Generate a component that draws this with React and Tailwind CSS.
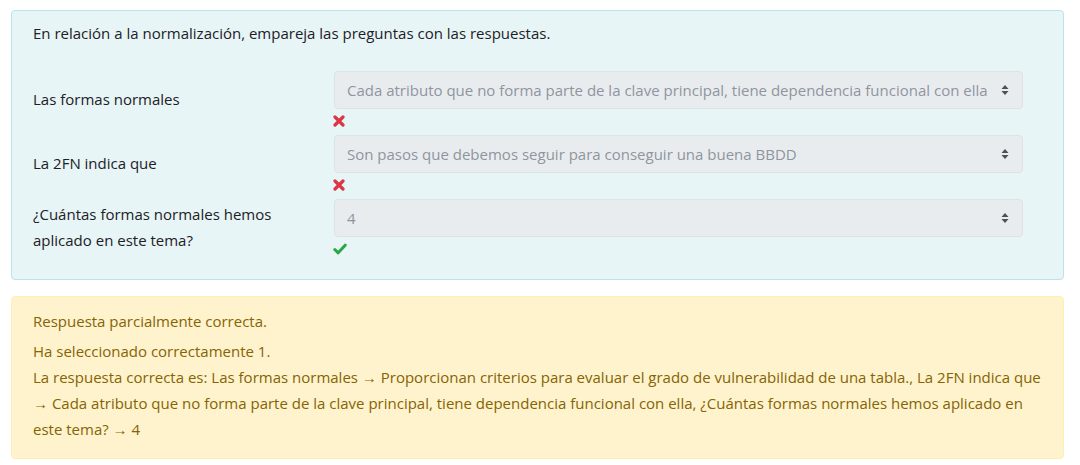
import React from 'react';

const rows = [
  { label: 'Las formas normales', value: 'Cada atributo que no forma parte de la clave principal, tiene dependencia funcional con ella', ok: false },
  { label: 'La 2FN indica que', value: 'Son pasos que debemos seguir para conseguir una buena BBDD', ok: false },
  { label: '¿Cuántas formas normales hemos aplicado en este tema?', value: '4', ok: true },
];

function Carets() {
  return (
    <svg width="8" height="12" viewBox="0 0 8 12" className="shrink-0">
      <path d="M4 1 L7.5 5 L0.5 5 Z" fill="#495057" />
      <path d="M4 11 L7.5 7 L0.5 7 Z" fill="#495057" />
    </svg>
  );
}

function Cross() {
  return (
    <svg width="12" height="12" viewBox="0 0 12 12">
      <path d="M2 2 L10 10 M10 2 L2 10" stroke="#dc3545" strokeWidth="3.2" strokeLinecap="round" />
    </svg>
  );
}

function Check() {
  return (
    <svg width="14" height="12" viewBox="0 0 14 12">
      <path d="M1.8 6.5 L5.2 9.8 L12.2 2.2" stroke="#28a745" strokeWidth="3" fill="none" strokeLinecap="round" strokeLinejoin="round" />
    </svg>
  );
}

export default function App() {
  return (
    <div className="bg-white min-h-[465px] px-[11px] pt-[10px] text-[15px] leading-[26px] text-[#1d2125]" style={{ fontFamily: '"Open Sans", "Liberation Sans", sans-serif' }}>
      {/* question */}
      <div className="w-[1053px] rounded-[4px] border border-[#b8e4ec] bg-[#e7f5f7] pl-[21px] pr-[40px] pt-[9px] pb-[20px]">
        <p>En relación a la normalización, empareja las preguntas con las respuestas.</p>
        <div className="mt-[25px] flex flex-col gap-[4px]">
          {rows.map((r) => (
            <div key={r.label} className="flex items-center">
              <div className="w-[301px] pr-[30px] pb-[4px]">{r.label}</div>
              <div className="flex flex-col">
                <div className="flex h-[38px] w-[689px] items-center justify-between rounded-[4px] border border-[#dee2e6] bg-[#e9ecef] pl-[12px] pr-[13px] text-[#8f959e]">
                  <span className="truncate">{r.value}</span>
                  <Carets />
                </div>
                <div className="flex h-[22px] items-center">
                  <span className="ml-[-1px] mt-[2px]">{r.ok ? <Check /> : <Cross />}</span>
                </div>
              </div>
            </div>
          ))}
        </div>
      </div>

      {/* feedback */}
      <div className="mt-[16px] w-[1053px] rounded-[4px] border border-[#ffeeba] bg-[#fff3cd] pl-[21px] pr-[20px] pt-[11px] pb-[16px] text-[#856404]">
        <p>Respuesta parcialmente correcta.</p>
        <p className="mt-[4px]">Ha seleccionado correctamente 1.</p>
        <p>La respuesta correcta es: Las formas normales → Proporcionan criterios para evaluar el grado de vulnerabilidad de una tabla., La 2FN indica que → Cada atributo que no forma parte de la clave principal, tiene dependencia funcional con ella, ¿Cuántas formas normales hemos aplicado en este tema? → 4</p>
      </div>
    </div>
  );
}
